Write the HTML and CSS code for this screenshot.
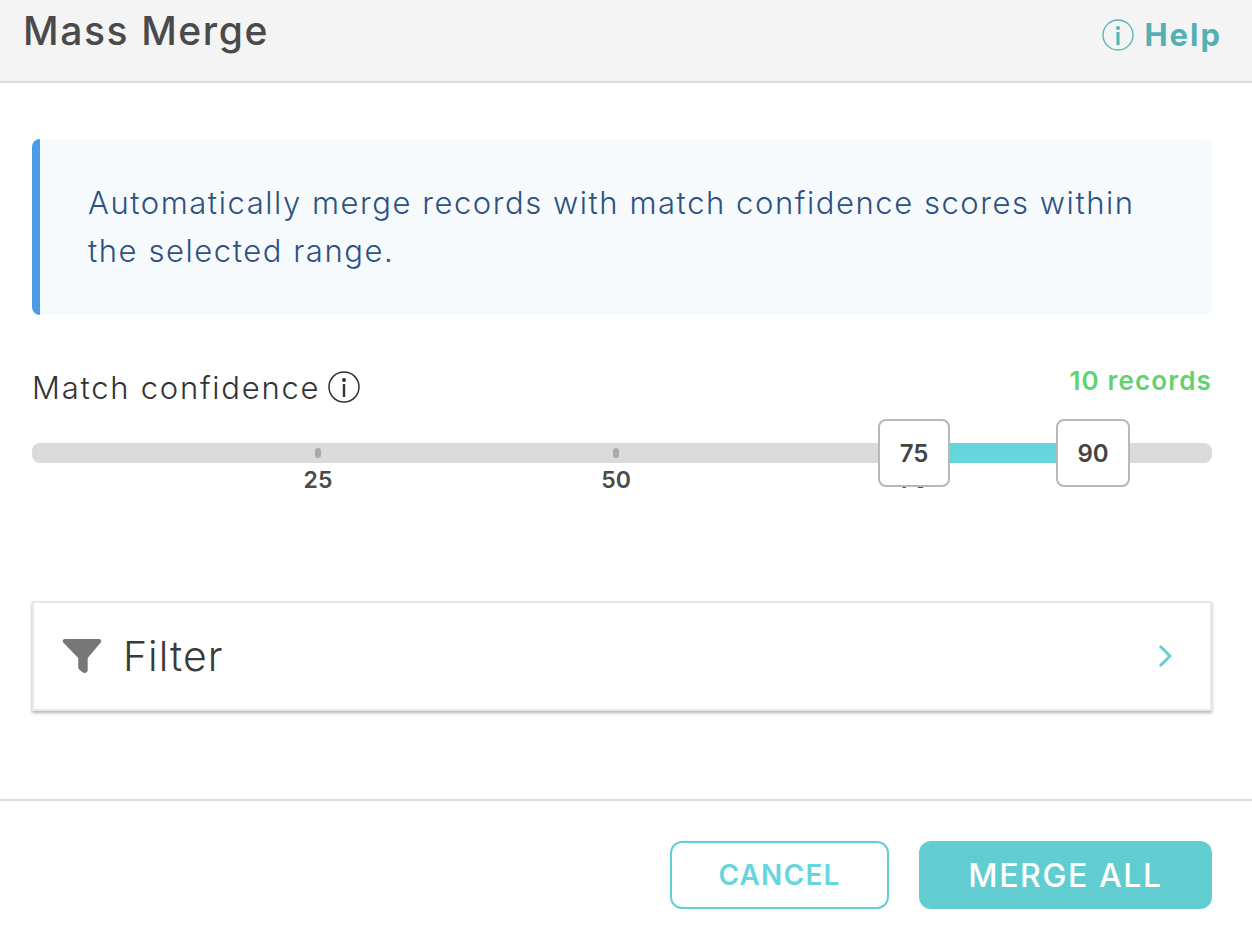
FILE: index.html
```html
<!DOCTYPE html>
<html lang="en">
<head>
    <meta charset="UTF-8">
    <title>Mass Merge</title>
    <link rel="stylesheet" href="styles.css">
</head>
<body>
    <header class="top">
        <h1>Mass Merge</h1>
        <a class="help" href="#">
            <svg class="info" viewBox="0 0 32 32"><circle cx="16" cy="16" r="15" fill="none" stroke="currentColor" stroke-width="1.3"/><circle cx="16" cy="9" r="2" fill="currentColor"/><rect x="14.5" y="13" width="3" height="13" fill="currentColor"/></svg>
            Help
        </a>
    </header>

    <main class="content">
        <div class="notice">Automatically merge records with match confidence scores within the selected range.</div>

        <div class="range-head">
            <div class="range-label">
                Match confidence
                <svg class="info small" viewBox="0 0 32 32"><circle cx="16" cy="16" r="15" fill="none" stroke="currentColor" stroke-width="1.5"/><circle cx="16" cy="9" r="2" fill="currentColor"/><rect x="14.8" y="13" width="2.4" height="13" fill="currentColor"/></svg>
            </div>
            <div class="records">10 records</div>
        </div>

        <div class="slider">
            <div class="track"></div>
            <div class="fill"></div>
            <div class="tick tick-25"><i></i><span>25</span></div>
            <div class="tick tick-50"><i></i><span>50</span></div>
            <div class="tick tick-75"><i></i><span>75</span></div>
            <div class="handle handle-low">75</div>
            <div class="handle handle-high">90</div>
        </div>

        <div class="filter">
            <svg class="funnel" viewBox="0 0 42 38"><path d="M3 1h36c2 0 3 2 2 3.500L27 21v13c0 1-.5 2-1.500 2.500-1 .5-2 .5-3 .2l-4-3c-1-.7-1.500-1.500-1.500-2.700V21L1 4.500C0 3 1 1 3 1z" fill="#777"/></svg>
            <span class="filter-name">Filter</span>
            <svg class="chevron" viewBox="0 0 14 24"><path d="M2 2l10 10L2 22" fill="none" stroke="currentColor" stroke-width="3"/></svg>
        </div>
    </main>

    <footer class="bottom">
        <button class="btn btn-outline">CANCEL</button>
        <button class="btn btn-solid">MERGE ALL</button>
    </footer>
</body>
</html>
```

FILE: styles.css
```css
* {
    box-sizing: border-box;
}

html, body {
    height: 100%;
}

body {
    margin: 0;
    font-family: Inter, "Open Sans", sans-serif;
    color: #444;
    background: white;
    overflow: hidden;
}

.top {
    height: 83px;
    background-color: #f4f4f4;
    border-bottom: 2px solid #dcdcdc;
    padding: 0 30px 0 23px;
    display: flex;
    justify-content: space-between;
    align-items: center;
}

.top h1 {
    margin: 0 0 21px;
    font-size: 39px;
    font-weight: 500;
    letter-spacing: 1.6px;
    color: #4a4a4a;
}

.help {
    display: flex;
    align-items: center;
    gap: 10px;
    margin-bottom: 12px;
    color: #53b1b6;
    font-size: 31px;
    font-weight: 700;
    letter-spacing: 2px;
    text-decoration: none;
}

.info {
    width: 32px;
    height: 32px;
}

.info.small {
    color: #333;
}

.content {
    height: 718px;
    padding: 56px 40px 0 32px;
    border-bottom: 2px solid #dcdcdc;
}

.notice {
    height: 176px;
    background-color: #f7fafd;
    border-left: 8px solid #4a9be8;
    border-radius: 8px;
    padding: 40px 48px 0;
    font-size: 31px;
    line-height: 48px;
    font-weight: 300;
    letter-spacing: 1.55px;
    color: #2c5282;
}

.range-head {
    display: flex;
    justify-content: space-between;
    margin-top: 48px;
}

.range-label {
    display: flex;
    align-items: center;
    gap: 8px;
    font-size: 31px;
    font-weight: 300;
    letter-spacing: 1.75px;
    color: #333;
    height: 48px;
}

.records {
    font-size: 26px;
    font-weight: 600;
    letter-spacing: 1.15px;
    color: #62d26f;
    margin-top: 2px;
}

.slider {
    position: relative;
    height: 178px;
    margin-top: 12px;
}

.track {
    position: absolute;
    left: 0;
    right: 0;
    top: 20px;
    height: 20px;
    background-color: #dadada;
    border-radius: 8px;
}

.fill {
    position: absolute;
    left: 916px;
    width: 110px;
    top: 20px;
    height: 20px;
    background-color: #67d6dc;
}

.tick {
    position: absolute;
    top: 25px;
    width: 60px;
    margin-left: -30px;
    text-align: center;
    font-size: 23px;
    font-weight: 600;
    color: #4a4a4a;
}

.tick i {
    display: block;
    width: 6px;
    height: 10px;
    margin: 0 auto;
    background-color: #aaa;
    border-radius: 3px;
}

.tick span {
    display: block;
    line-height: 28px;
    margin-top: 8px;
}

.tick-25 { left: 286px; }
.tick-50 { left: 584px; }
.tick-75 { left: 882px; }

.handle {
    position: absolute;
    top: -4px;
    height: 68px;
    background: white;
    border: 2px solid #b8b8b8;
    border-radius: 8px;
    display: flex;
    align-items: center;
    justify-content: center;
    font-size: 24px;
    font-weight: 600;
    color: #444;
}

.handle-low {
    left: 846px;
    width: 72px;
}

.handle-high {
    left: 1024px;
    width: 74px;
}

.filter {
    height: 110px;
    border: 2px solid #e8e8e8;
    box-shadow: 0 2px 3px rgba(0, 0, 0, 0.3);
    display: flex;
    align-items: center;
    padding: 0 38px 0 28px;
}

.funnel {
    width: 40px;
    height: 36px;
}

.filter-name {
    flex: 1;
    margin-left: 21px;
    font-size: 41px;
    font-weight: 300;
    letter-spacing: 1px;
    color: #3a3a3a;
}

.chevron {
    width: 14px;
    height: 24px;
    color: #62cfd4;
}

.bottom {
    display: flex;
    justify-content: flex-end;
    gap: 30px;
    padding: 40px 40px 0 0;
}

.btn {
    height: 68px;
    border-radius: 12px;
    font-family: inherit;
    cursor: pointer;
}

.btn-outline {
    width: 219px;
    background: white;
    border: 2px solid #62cfd4;
    color: #67d6dc;
    font-size: 28px;
    font-weight: 600;
    letter-spacing: 1.2px;
}

.btn-solid {
    width: 293px;
    background-color: #62cdd1;
    border: none;
    color: white;
    font-size: 32px;
    font-weight: 500;
    letter-spacing: 1.6px;
}
```
